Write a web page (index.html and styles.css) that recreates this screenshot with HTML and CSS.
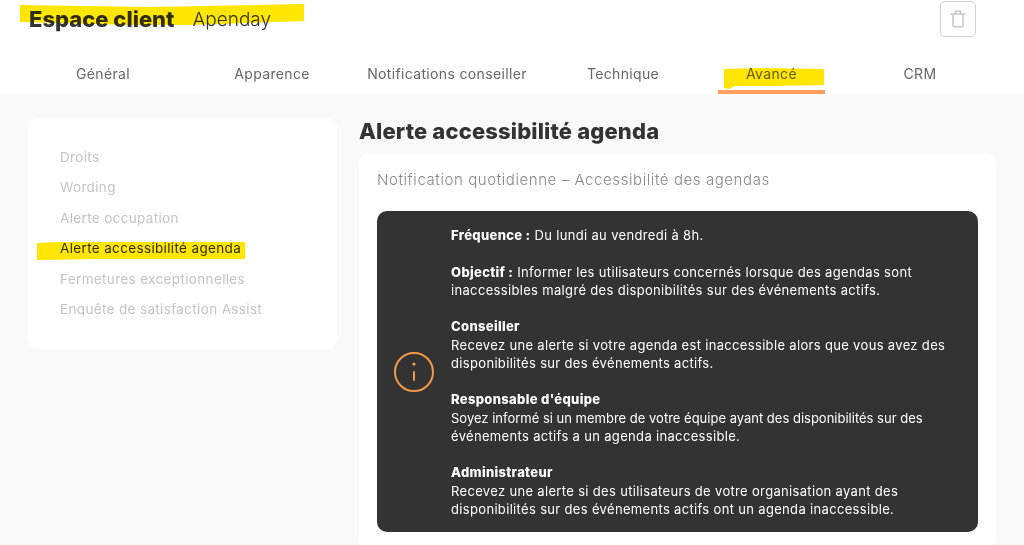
FILE: index.html
```html
<!DOCTYPE html>
<html lang="fr">
<head>
    <meta charset="UTF-8">
    <meta name="viewport" content="width=device-width, initial-scale=1.0">
    <title>Espace client</title>
    <link rel="stylesheet" href="styles.css">
</head>
<body>

    <header>
        <div class="brand-row">
            <h1>Espace client</h1>
            <span class="brand-name">Apenday</span>
            <button class="trash-btn" aria-label="Supprimer">
                <svg width="20" height="20" viewBox="0 0 20 20" fill="none" stroke="#c9c9c9" stroke-width="1.6" stroke-linejoin="round" stroke-linecap="round">
                    <path d="M3 5h14"/>
                    <path d="M7.5 4.8V2h5v2.8"/>
                    <path d="M5 5.2v11c0 1 .6 1.6 1.5 1.6h7c.9 0 1.5-.6 1.5-1.6v-11"/>
                </svg>
            </button>
        </div>
        <nav class="tabs">
            <a href="#">Général</a>
            <a href="#">Apparence</a>
            <a href="#">Notifications conseiller</a>
            <a href="#">Technique</a>
            <a href="#" class="active">Avancé</a>
            <a href="#">CRM</a>
        </nav>
    </header>

    <div class="page">
        <aside class="sidebar">
            <a href="#">Droits</a>
            <a href="#">Wording</a>
            <a href="#">Alerte occupation</a>
            <a href="#" class="current">Alerte accessibilité agenda</a>
            <a href="#">Fermetures exceptionnelles</a>
            <a href="#">Enquête de satisfaction Assist</a>
        </aside>

        <main class="content">
            <h2>Alerte accessibilité agenda</h2>
            <section class="card">
                <p class="card-title">Notification quotidienne – Accessibilité des agendas</p>
                <div class="notice">
                    <div class="notice-icon">
                        <svg width="40" height="40" viewBox="0 0 40 40" fill="none" stroke="#f2994a" stroke-width="2" stroke-linecap="round">
                            <circle cx="20" cy="20" r="19"/>
                            <path d="M20 20v8"/>
                            <circle cx="20" cy="12" r="1.6" fill="#f2994a" stroke="none"/>
                        </svg>
                    </div>
                    <div class="notice-text">
                        <p><b>Fréquence :</b> Du lundi au vendredi à 8h.</p>
                        <p><b>Objectif :</b> Informer les utilisateurs concernés lorsque des agendas sont<br>inaccessibles malgré des disponibilités sur des événements actifs.</p>
                        <p><b>Conseiller</b><br>Recevez une alerte si votre agenda est inaccessible alors que vous avez des<br>disponibilités sur des événements actifs.</p>
                        <p><b>Responsable d'équipe</b><br><span class="tight">Soyez informé si un membre de votre équipe ayant des disponibilités sur des</span><br>événements actifs a un agenda inaccessible.</p>
                        <p><b>Administrateur</b><br>Recevez une alerte si des utilisateurs de votre organisation ayant des<br>disponibilités sur des événements actifs ont un agenda inaccessible.</p>
                    </div>
                </div>
            </section>
        </main>
    </div>

    <!-- marker strokes painted over the screenshot -->
    <svg class="marks" width="1024" height="545" viewBox="0 0 1024 545">
        <path d="M20 5 L150 7 L304 4 L304 21 L190 25 L130 25 L20 22 Z"/>
        <path d="M724 69 L760 68 L824 69 L824 85 L770 86 L735 86 L729 89 L724 88 Z"/>
        <path d="M37 243 L60 242 L245 242 L245 259 L100 259 L37 260 Z"/>
    </svg>

</body>
</html>
```

FILE: styles.css
```css
html, body {
    margin: 0;
    padding: 0;
    height: 545px;
    overflow: hidden;
}
body {
    font-family: 'Inter', 'Liberation Sans', sans-serif;
    background-color: #f9f9f9;
    color: #333;
    position: relative;
}
a {
    text-decoration: none;
}

/* Header */
header {
    background-color: #fff;
    height: 94px;
}
.brand-row {
    display: flex;
    align-items: center;
    height: 38px;
    padding-left: 29px;
    padding-right: 48px;
}
h1 {
    margin: 0;
    font-size: 22px;
    font-weight: 800;
}
.brand-name {
    margin-left: 18px;
    font-size: 19px;
    font-weight: 300;
}
.trash-btn {
    margin-left: auto;
    width: 36px;
    height: 36px;
    padding: 0;
    display: flex;
    align-items: center;
    justify-content: center;
    background: #fff;
    border: 1.5px solid #d2d2d2;
    border-radius: 5px;
}
.tabs {
    display: grid;
    grid-template-columns: 150px 188px 162px 190px 107px 190px;
    padding-left: 28px;
    margin-top: 16px;
}
.tabs a {
    height: 40px;
    box-sizing: border-box;
    line-height: 40px;
    text-align: center;
    font-size: 14px;
    letter-spacing: .35px;
    color: #666;
}
.tabs a.active {
    border-bottom: 4px solid #ff9f5f;
}

/* Page */
.page {
    display: flex;
    align-items: flex-start;
    padding: 24px 28px 0;
    gap: 22px;
}
.sidebar {
    width: 309px;
    height: 231px;
    box-sizing: border-box;
    padding: 30px 32px;
    background-color: #fff;
    border-radius: 10px;
    display: flex;
    flex-direction: column;
    gap: 12px;
}
.sidebar a {
    height: 18.4px;
    line-height: 18.4px;
    font-size: 13.5px;
    letter-spacing: .35px;
    color: #c4c4c4;
}
.sidebar a.current {
    color: #333;
}

.content {
    width: 637px;
}
h2 {
    margin: 0 0 9px;
    font-size: 22px;
    line-height: 26px;
    letter-spacing: .15px;
    font-weight: 800;
}
.card {
    background-color: #fff;
    border-radius: 10px;
    padding: 18px;
}
.card-title {
    margin: 0 0 22px;
    font-size: 15px;
    font-weight: 300;
    line-height: 18px;
    letter-spacing: .58px;
    color: #888;
}
.notice {
    display: flex;
    background-color: #333;
    border-radius: 10px;
    color: #fff;
    padding: 15px 0 14px;
}
.notice-icon {
    flex: 0 0 74px;
    display: flex;
    align-items: center;
    justify-content: center;
}
.notice-text {
    font-size: 13px;
    line-height: 18.25px;
    letter-spacing: .33px;
}
.notice-text p {
    margin: 0 0 18.25px;
}
.notice-text p:last-child {
    margin-bottom: 0;
}
.notice-text b {
    font-weight: 800;
}
.notice-text .tight {
    letter-spacing: 0;
}

.marks {
    position: absolute;
    top: 0;
    left: 0;
    fill: #ffe600;
    mix-blend-mode: multiply;
    pointer-events: none;
}
```
